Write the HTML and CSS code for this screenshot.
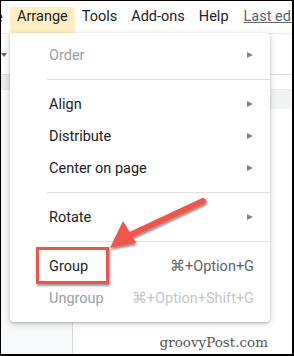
FILE: index.html
```html
<!DOCTYPE html>
<html lang="en">
<head>
  <meta charset="UTF-8">
  <title>Arrange menu</title>
  <link rel="stylesheet" href="styles.css">
</head>
<body>
  <div class="frame">
    <!-- Menu bar -->
    <div class="menubar">
      <span class="menu-cut">e</span>
      <span class="menu-item open">Arrange</span>
      <span class="menu-item">Tools</span>
      <span class="menu-item">Add-ons</span>
      <span class="menu-item">Help</span>
      <span class="last-edit">Last edit was seconds ago</span>
    </div>

    <div class="toolbar">
      <span class="caret"></span>
    </div>

    <div class="workspace">
      <div class="filmstrip">
        <div class="film-row"></div>
      </div>
      <div class="canvas">
        <div class="canvas-band"></div>
        <div class="watermark">groovyPost.com</div>
      </div>
    </div>

    <!-- Arrange dropdown -->
    <div class="dropdown">
      <div class="dd-item disabled"><span>Order</span><span class="sub"></span></div>
      <div class="dd-sep"></div>
      <div class="dd-item"><span>Align</span><span class="sub"></span></div>
      <div class="dd-item"><span>Distribute</span><span class="sub"></span></div>
      <div class="dd-item"><span>Center on page</span><span class="sub"></span></div>
      <div class="dd-sep"></div>
      <div class="dd-item"><span>Rotate</span><span class="sub"></span></div>
      <div class="dd-sep"></div>
      <div class="dd-item"><span>Group</span><span class="shortcut">⌘+Option+G</span></div>
      <div class="dd-item disabled"><span>Ungroup</span><span class="shortcut">⌘+Option+Shift+G</span></div>
    </div>

    <!-- Annotation: red box + arrow -->
    <div class="callout-box"></div>
    <svg class="callout-arrow" width="294" height="356" viewBox="0 0 294 356">
      <defs>
        <filter id="drop" x="-20%" y="-20%" width="140%" height="140%">
          <feDropShadow dx="1" dy="2" stdDeviation="1.2" flood-color="#000" flood-opacity="0.45"/>
        </filter>
      </defs>
      <g filter="url(#drop)">
        <line x1="203" y1="201" x2="128" y2="236" stroke="#ef5448" stroke-width="6" stroke-linecap="round"/>
        <polygon points="110,248 123,221 136,243" fill="#ef5448"/>
      </g>
    </svg>
  </div>
</body>
</html>
```

FILE: styles.css
```css
body {
  margin: 0;
  font-family: Roboto, Arial, sans-serif;
  color: #202124;
}
.frame {
  position: relative;
  width: 294px;
  height: 356px;
  box-sizing: border-box;
  border-style: solid;
  border-color: #000;
  border-width: 1px 2px 2px 1px;
  overflow: hidden;
  background: #fff;
}
.menubar {
  display: flex;
  align-items: flex-end;
  height: 32px;
  font-size: 14.5px;
  white-space: nowrap;
}
.menu-cut {
  width: 3px;
  margin-left: -6px;
  padding: 0 3px 7px 0;
}
.menu-item {
  padding: 0 7px 7px;
  height: 19px;
  line-height: 19px;
}
.menu-item.open {
  margin-left: 9px;
  background: #feefc3;
  border-radius: 3px 3px 0 0;
}
.last-edit {
  margin-left: 8px;
  padding-bottom: 7px;
  line-height: 19px;
  color: #5f6368;
  text-decoration: underline;
}
.toolbar {
  position: relative;
  height: 40px;
  border-top: 1px solid #e8eaed;
  border-bottom: 1px solid #dadce0;
}
.caret {
  position: absolute;
  left: 0;
  top: 19px;
  border-left: 3px solid transparent;
  border-right: 3px solid transparent;
  border-top: 4px solid #5f6368;
}
.workspace {
  display: flex;
  height: 282px;
}
.filmstrip {
  width: 71px;
  background: #f8f9fa;
  border-right: 1px solid #dadce0;
}
.film-row {
  height: 15px;
  background: #e8eaed;
}
.canvas {
  flex: 1;
  display: flex;
  flex-direction: column;
  background: #fff;
}
.canvas-band {
  height: 19px;
  margin-top: 14px;
  background: #f1f3f4;
  border-top: 1px solid #e8eaed;
}
.watermark {
  margin-top: auto;
  margin-bottom: 7px;
  text-align: right;
  padding-right: 24px;
  font-family: "DejaVu Serif", "Liberation Serif", serif;
  font-size: 13.5px;
  color: #555;
}
.dropdown {
  position: absolute;
  left: 9px;
  top: 32px;
  width: 260px;
  box-sizing: border-box;
  padding: 6px 0 8px;
  background: #fff;
  border-radius: 0 4px 4px 4px;
  box-shadow: 0 2px 6px rgba(60, 64, 67, 0.25), 0 1px 2px rgba(60, 64, 67, 0.2);
  font-size: 14.5px;
}
.dd-item {
  display: flex;
  align-items: center;
  justify-content: space-between;
  height: 32px;
  padding: 0 16px 0 39px;
}
.dd-item.disabled {
  color: #9aa0a6;
}
.dd-sep {
  height: 1px;
  background: #e0e0e0;
  margin: 8px 0 8px 37px;
}
.sub {
  width: 0;
  height: 0;
  border-top: 3.5px solid transparent;
  border-bottom: 3.5px solid transparent;
  border-left: 6px solid #80868b;
  margin-right: 1px;
}
.shortcut {
  color: #5f6368;
}
.dd-item.disabled .shortcut {
  color: #c4c7ca;
}
.callout-box {
  position: absolute;
  left: 35px;
  top: 246px;
  width: 73px;
  height: 37px;
  box-sizing: border-box;
  border: 3px solid #ef5448;
  box-shadow: 1px 2px 2px rgba(0, 0, 0, 0.4);
}
.callout-arrow {
  position: absolute;
  left: -1px;
  top: -1px;
}
```
